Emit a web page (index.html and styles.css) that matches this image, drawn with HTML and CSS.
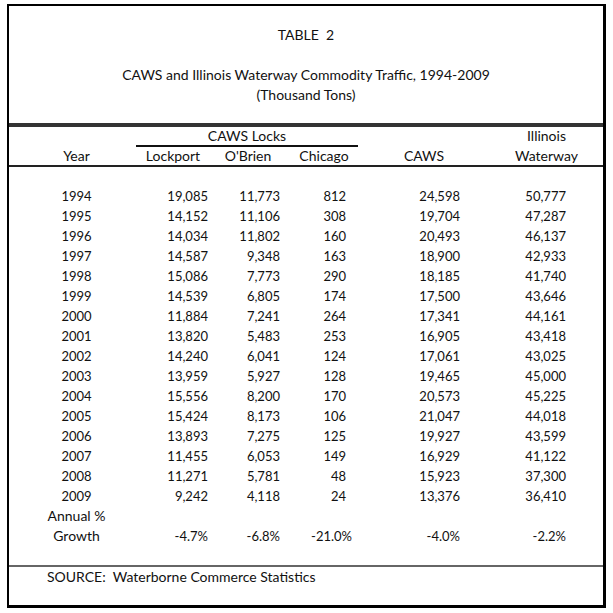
FILE: index.html
```html
<!DOCTYPE html>
<html lang="en">
<head>
<meta charset="utf-8">
<title>Table 2</title>
<link rel="stylesheet" href="styles.css">
</head>
<body>
<div class="sheet">
  <header class="title-block">
    <p class="t1">TABLE&nbsp; 2</p>
    <p class="t2">CAWS and Illinois Waterway Commodity Traffic, 1994-2009<br>(Thousand Tons)</p>
  </header>
  <div class="grid head">
    <div class="c1"></div>
    <div class="locks">CAWS Locks</div>
    <div class="c5"></div>
    <div class="h6">Illinois</div>
    <div class="c1 hy">Year</div>
    <div class="h2">Lockport</div>
    <div class="h3">O'Brien</div>
    <div class="h4">Chicago</div>
    <div class="h5">CAWS</div>
    <div class="h6">Waterway</div>
  </div>
  <div class="grid body">
    <div class="c1">1994</div><div class="n2">19,085</div><div class="n3">11,773</div><div class="n4">812</div><div class="n5">24,598</div><div class="n6">50,777</div>
    <div class="c1">1995</div><div class="n2">14,152</div><div class="n3">11,106</div><div class="n4">308</div><div class="n5">19,704</div><div class="n6">47,287</div>
    <div class="c1">1996</div><div class="n2">14,034</div><div class="n3">11,802</div><div class="n4">160</div><div class="n5">20,493</div><div class="n6">46,137</div>
    <div class="c1">1997</div><div class="n2">14,587</div><div class="n3">9,348</div><div class="n4">163</div><div class="n5">18,900</div><div class="n6">42,933</div>
    <div class="c1">1998</div><div class="n2">15,086</div><div class="n3">7,773</div><div class="n4">290</div><div class="n5">18,185</div><div class="n6">41,740</div>
    <div class="c1">1999</div><div class="n2">14,539</div><div class="n3">6,805</div><div class="n4">174</div><div class="n5">17,500</div><div class="n6">43,646</div>
    <div class="c1">2000</div><div class="n2">11,884</div><div class="n3">7,241</div><div class="n4">264</div><div class="n5">17,341</div><div class="n6">44,161</div>
    <div class="c1">2001</div><div class="n2">13,820</div><div class="n3">5,483</div><div class="n4">253</div><div class="n5">16,905</div><div class="n6">43,418</div>
    <div class="c1">2002</div><div class="n2">14,240</div><div class="n3">6,041</div><div class="n4">124</div><div class="n5">17,061</div><div class="n6">43,025</div>
    <div class="c1">2003</div><div class="n2">13,959</div><div class="n3">5,927</div><div class="n4">128</div><div class="n5">19,465</div><div class="n6">45,000</div>
    <div class="c1">2004</div><div class="n2">15,556</div><div class="n3">8,200</div><div class="n4">170</div><div class="n5">20,573</div><div class="n6">45,225</div>
    <div class="c1">2005</div><div class="n2">15,424</div><div class="n3">8,173</div><div class="n4">106</div><div class="n5">21,047</div><div class="n6">44,018</div>
    <div class="c1">2006</div><div class="n2">13,893</div><div class="n3">7,275</div><div class="n4">125</div><div class="n5">19,927</div><div class="n6">43,599</div>
    <div class="c1">2007</div><div class="n2">11,455</div><div class="n3">6,053</div><div class="n4">149</div><div class="n5">16,929</div><div class="n6">41,122</div>
    <div class="c1">2008</div><div class="n2">11,271</div><div class="n3">5,781</div><div class="n4">48</div><div class="n5">15,923</div><div class="n6">37,300</div>
    <div class="c1">2009</div><div class="n2">9,242</div><div class="n3">4,118</div><div class="n4">24</div><div class="n5">13,376</div><div class="n6">36,410</div>
    <div class="c1 lbl">Annual %</div><div></div><div></div><div></div><div></div><div></div>
    <div class="c1 lbl">Growth</div><div class="p2">-4.7%</div><div class="p3">-6.8%</div><div class="p4">-21.0%</div><div class="p5">-4.0%</div><div class="p6">-2.2%</div>
  </div>
  <footer class="source">SOURCE:  Waterborne Commerce Statistics</footer>
</div>
</body>
</html>
```

FILE: styles.css
```css
html, body {
  margin: 0;
  padding: 0;
  background: #fff;
}
body {
  font-family: Lato, "Liberation Sans", sans-serif;
  font-size: 14px;
  color: #111;
}
.sheet {
  margin: 4px 0 0 7px;
  width: 599px;
  box-sizing: border-box;
  border-top: 2px solid #000;
  border-left: 2px solid #000;
  border-right: 3px solid #000;
  border-bottom: 3px solid #000;
}
.title-block {
  height: 121px;
  box-sizing: border-box;
  padding-top: 19px;
  border-bottom: 4px solid #333;
  text-align: center;
}
.title-block p {
  margin: 0;
  line-height: 20px;
}
.t1 {
  margin-bottom: 20px !important;
}
.grid {
  display: grid;
  grid-template-columns: 127px 76px 72px 74px 136px 109px;
}
.head {
  grid-template-rows: 20px 18px;
  line-height: 18px;
  border-bottom: 2px solid #222;
}
.head > div {
  text-align: center;
}
.locks {
  grid-column: 2 / span 3;
  border-bottom: 2px solid #111;
  box-sizing: border-box;
}
.hy { padding-left: 8px; }
.h2 { padding-right: 2px; }
.h4 { padding-left: 6px; }
.h5 { padding-right: 4px; }
.h6 { padding-right: 4px; }
.body {
  padding: 19px 0 19px;
  grid-auto-rows: 20px;
  line-height: 20px;
  border-bottom: 2px solid #666;
  font-size: 13px;
}
.body .c1 {
  text-align: center;
  padding-left: 8px;
}
.body .lbl {
  font-size: 14px;
}
.n2, .n3, .n4, .n5, .n6,
.p2, .p3, .p4, .p5, .p6 {
  text-align: right;
}
.n2, .p2 { padding-right: 4px; }
.n3, .p3 { padding-right: 4px; }
.n4 { padding-right: 12px; }
.p4 { padding-right: 6px; }
.n5, .p5 { padding-right: 34px; }
.n6, .p6 { padding-right: 37px; }
.source {
  height: 38px;
  box-sizing: border-box;
  padding-left: 38px;
  line-height: 20px;
  white-space: pre;
}
```
